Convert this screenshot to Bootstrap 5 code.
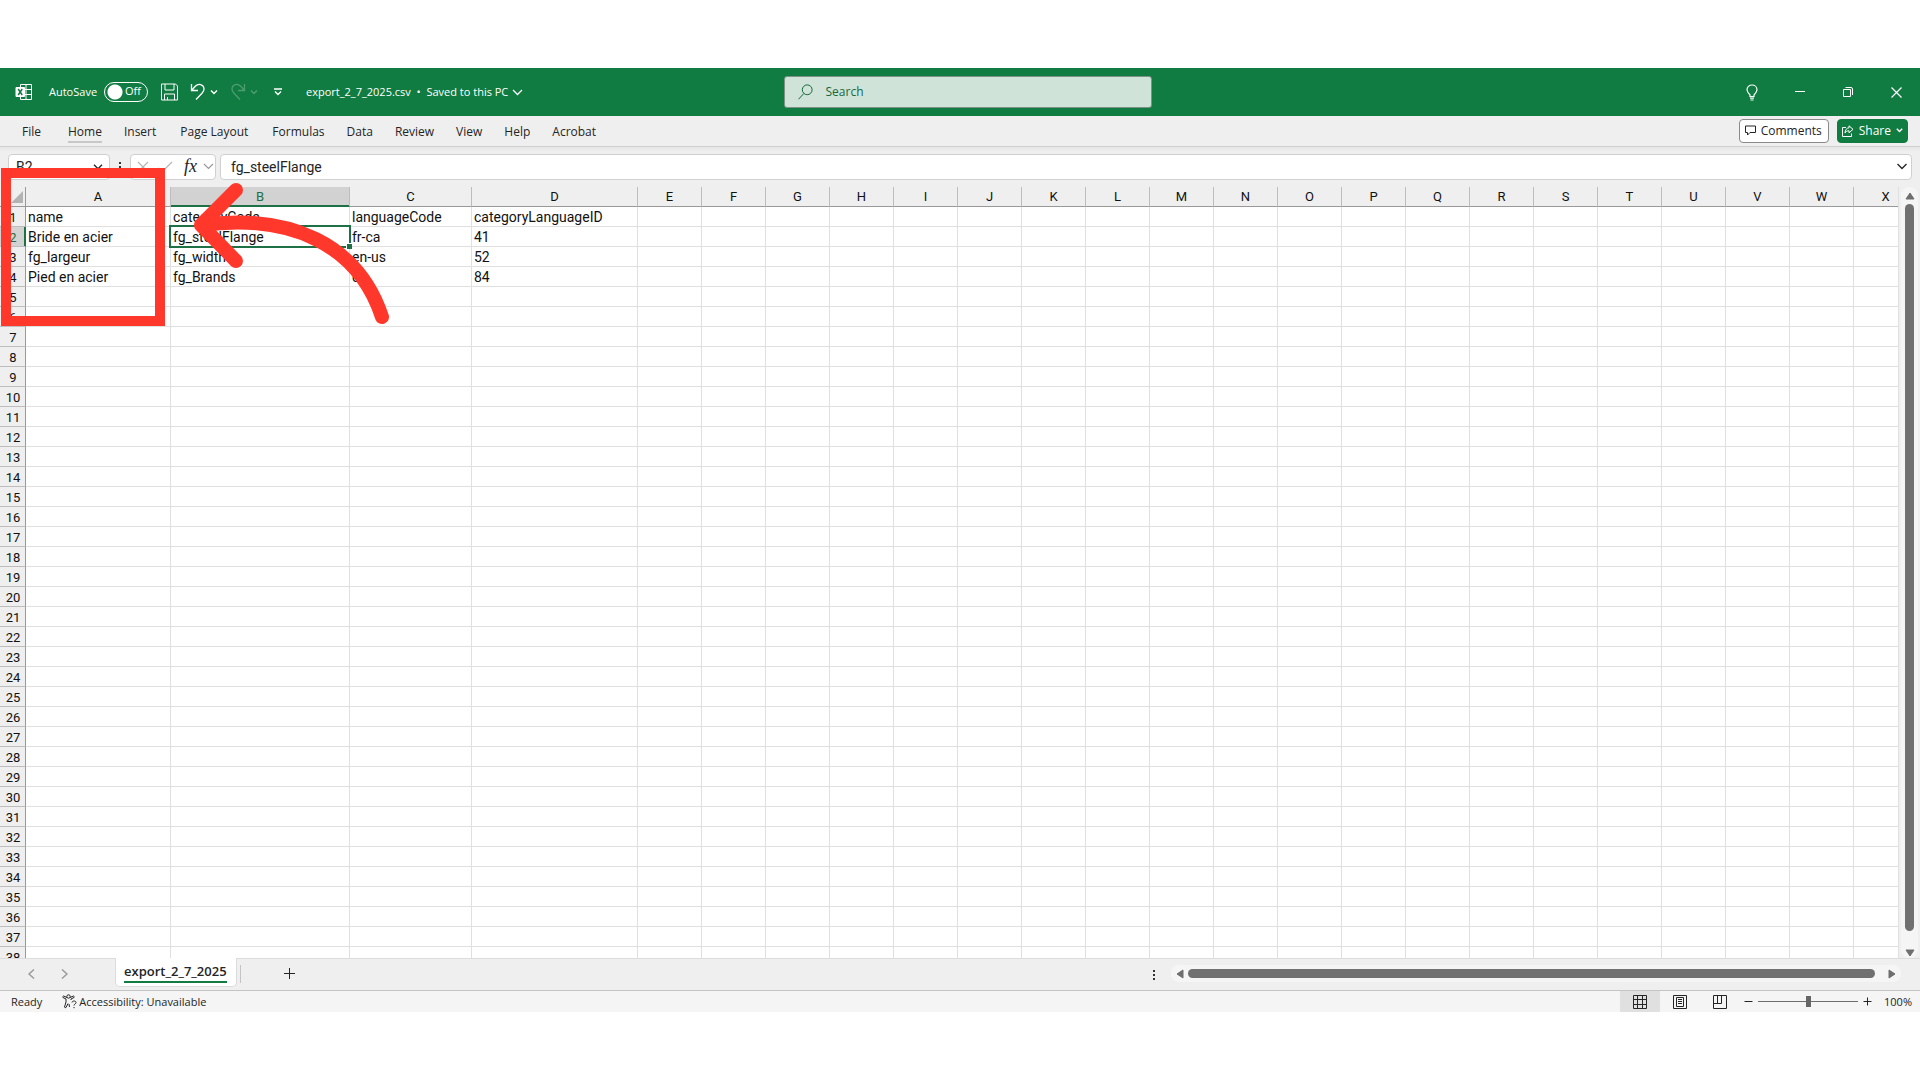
<!DOCTYPE html>
<html lang="en">
<head>
<meta charset="utf-8">
<meta name="viewport" content="width=device-width, initial-scale=1">
<title>export_2_7_2025.csv - Excel</title>
<link href="https://cdn.jsdelivr.net/npm/bootstrap@5.3.0/dist/css/bootstrap.min.css" rel="stylesheet">
<style>
  :root { --xl-green: #107c41; --xl-sel: #1e7145; --xl-bg: #efefef; --xl-red: #ff382b; }
  body { font-family: "Open Sans", "Noto Sans", sans-serif; font-size: 12px; line-height: 16px; color: #242424; background: #fff; height: 100vh; padding: 68px 0; overflow: hidden; }
  svg { display: block; flex: none; fill: none; stroke: currentColor; }
  svg.solid { stroke: none; }
  svg.soft { stroke: #999; }
  button { color: inherit; }
  .plain-btn { background: none; border: 0; padding: 0; display: flex; align-items: center; }
  .app-window { background: var(--xl-bg); }
  .title-bar { background: var(--xl-green); color: #fff; height: 48px; font-size: 11px; }
  .title-side { flex: 1 1 0; min-width: 0; height: 48px; }
  .title-left { padding-left: 15px; }
  .win-btn { width: 48px; height: 48px; justify-content: center; }
  .switch-box { appearance: none; width: 44px; height: 20px; border: 1px solid #fff; border-radius: 10px; margin: 0; background: radial-gradient(circle at 10px 9px, #fff 7px, transparent 8px); }
  .switch-wrap { display: grid; margin: 0 13px 0 7px; }
  .switch-wrap > * { grid-area: 1 / 1; }
  .switch-wrap span { padding: 1px 0 0 21px; pointer-events: none; }
  .search-box { width: 368px; height: 32px; background: #cfe3d8; border: 1px solid #7f9186; border-radius: 3px; padding: 0 13px; gap: 13px; color: #17693d; }
  .search-box input { background: none; border: 0; outline: 0; width: 100%; font-size: 12px; color: inherit; padding: 0; }
  .search-box input::placeholder { color: #17693d; opacity: 1; }
  .ribbon { height: 31px; border-bottom: 1px solid #cfcfcf; padding: 0 12px 0 11px; }
  .ribbon .nav-link { color: #242424; padding: 8px 11px 2px; line-height: 16px; }
  .ribbon .nav-link.file-link { margin-right: 5px; }
  .ribbon .nav-link.wide-link { padding: 8px 13px 2px; }
  .ribbon .nav-link span { display: block; border-bottom: 2px solid transparent; padding-bottom: 1px; }
  .ribbon .nav-link.active span { border-color: #c8c8c8; }
  .cmd-btn { height: 24px; border-radius: 4px; border: 1px solid #8a8a8a; background: #fff; padding: 0 6px 0 5px; display: flex; align-items: center; gap: 5px; }
  .cmd-share { background: var(--xl-green); border-color: var(--xl-green); color: #fff; padding: 0 4px; }
  .formula-row { height: 40px; padding: 7px 8px; background: linear-gradient(#e6e6e6, var(--xl-bg) 5px); }
  .field-box { height: 26px; background: #fff; border: 1px solid #d0d0d0; border-radius: 4px; display: flex; align-items: center; }
  .field-box input { border: 0; outline: 0; background: none; min-width: 0; flex: 1; padding: 0; color: #242424; font-family: Roboto, sans-serif; font-size: 14px; }
  .name-field { width: 102px; padding: 0 6px 0 7px; }
  .fx-field { width: 86px; padding: 0 1px 0 6px; color: #b5b5b5; }
  .formula-field { padding: 0 4px 0 10px; }
  .fx-sign { font: italic 18px "Liberation Serif", serif; color: #242424; margin-left: 11px; }
  .sheet-view { overflow: hidden; background: #fff; border-right: 1px solid #e0e0e0; }
  .sheet-grid { table-layout: fixed; border-collapse: separate; border-spacing: 0; width: 1918px; font-family: Roboto, sans-serif; font-size: 14px; line-height: 17px; color: #111; }
  .sheet-grid th, .sheet-grid td { height: 20px; padding: 2px 0 0; font-weight: 400; white-space: nowrap; border: solid #e0e0e0; border-width: 0 1px 1px 0; }
  .sheet-grid td { padding-left: 2px; }
  .sheet-grid th { background: var(--xl-bg); text-align: center; font-size: 13px; }
  .sheet-grid thead th { border-color: #bdbdbd; border-bottom-color: #999; padding-top: 1px; }
  .sheet-grid tbody th { border-color: #bdbdbd; border-right-color: #999; padding-left: 1px; }
  .sheet-grid thead th.corner { border-right-color: #999; }
  .corner svg { margin-left: 11px; }
  .sheet-grid thead th.col-on { background: #d2d2d2; color: var(--xl-sel); box-shadow: inset 0 -1px var(--xl-sel); border-bottom-color: var(--xl-sel); }
  .sheet-grid tbody th.row-on { background: #d2d2d2; color: var(--xl-sel); box-shadow: inset -1px 0 var(--xl-sel); border-right-color: var(--xl-sel); }
  .cell-on { position: relative; }
  .cell-on::before { content: ""; position: absolute; inset: -2px; border: 2px solid var(--xl-sel); }
  .cell-on::after { content: ""; position: absolute; right: -3px; bottom: -3px; width: 5px; height: 5px; background: var(--xl-sel); border: solid #fff; border-width: 1px 0 0 1px; box-sizing: content-box; }
  .v-track { width: 17px; margin: 0 2px; background: #f5f5f5; border-radius: 8px; padding: 5px 0 1px; color: #6e6e6e; }
  .v-thumb { width: 9px; border-radius: 5px; background: #707070; margin: 4px 0 18px; }
  .tab-row { height: 33px; border-top: 1px solid #dcdcdc; border-bottom: 1px solid #c4c4c4; padding: 0 19px 0 26px; }
  .tab-row .plain-btn { height: 29px; }
  .sheet-tab { background: #fff; border: 1px solid #dcdcdc; border-top: 0; border-radius: 0 0 5px 5px; height: 29px; margin: -1px 0 0 45px; padding: 3px 9px 0 8px; font-weight: 600; color: #242424; text-decoration: none; font-size: 13px; }
  .sheet-tab span { display: block; line-height: 20px; border-bottom: 2px solid var(--xl-green); }
  .tab-sep { width: 1px; height: 18px; background: #c4c4c4; margin: 6px 43px 0 3px; }
  .h-track { width: 730px; height: 17px; border-radius: 8px; background: #f5f5f5; padding: 0 5px; color: #6e6e6e; margin-top: 6px; }
  .h-thumb { height: 9px; border-radius: 5px; background: #707070; margin: 0 13px 0 4px; }
  .status-row { height: 21px; background: #f5f5f5; padding: 0 8px 0 11px; font-size: 11px; }
  .acc-text { margin-left: 2px; }
  .view-btn { width: 40px; height: 21px; justify-content: center; }
  .view-btn.is-on { background: #e0e0e0; }
  .zoom-range { appearance: none; width: 100px; height: 12px; margin: 0 5px; background: linear-gradient(#6e6e6e, #6e6e6e) center / 100% 1px no-repeat; }
  .zoom-range::-webkit-slider-thumb { appearance: none; width: 5px; height: 11px; background: #666; }
  .mark-frame { position: absolute; left: 1px; top: 168px; width: 164px; height: 158px; border: 10px solid var(--xl-red); }
  .mark-arrow { position: absolute; left: 190px; top: 178px; color: var(--xl-red); }
</style>
<script src="https://cdn.jsdelivr.net/npm/bootstrap@5.3.0/dist/js/bootstrap.bundle.min.js" defer></script>
</head>
<body>
<div class="app-window d-flex flex-column h-100">
  <header class="title-bar d-flex align-items-center">
    <div class="title-side title-left d-flex align-items-center">
      <svg width="18" height="18" viewBox="0 0 18 18"><path d="M5.500 4V1.500h11v15h-11V14M11 1.500v15M5.500 6.500h11M5.500 11.500h11"/><path d="M1 4.500h8.500v9H1z" fill="#fff" stroke="#fff"/><path d="M3.200 6l4 6M7.200 6l-4 6" stroke="#107c41" stroke-width="1.500"/></svg>
      <label for="autosave" class="ms-3">AutoSave</label>
      <div class="switch-wrap"><input class="switch-box" type="checkbox" id="autosave"><span>Off</span></div>
      <button class="plain-btn" aria-label="Save"><svg width="17" height="18" viewBox="0 0 17 18"><path d="M.5 1h14l2 2v14H.5zM4 1v6h9V1M3.500 17v-6h10v6M6.500 17v-3"/></svg></button>
      <button class="plain-btn ms-2 ps-1" aria-label="Undo"><svg width="16" height="18" viewBox="0 0 16 18" stroke-width="1.300"><path d="M1.500 1v6.500H8M1.500 7.500l4-4.500c3-3 8-1.800 8.500 2.500.2 2-.7 3.300-2 4.700L6 16.500"/></svg><svg class="ms-1" width="8" height="6" viewBox="0 0 8 6" stroke-width="1.400"><path d="M1 1.500l3 3 3-3"/></svg></button>
      <button class="plain-btn ms-2 ps-1 opacity-25" aria-label="Redo"><svg width="16" height="18" viewBox="0 0 16 18" stroke-width="1.300"><path d="M14.500 1v6.500H8M14.500 7.500l-4-4.500C7.500 0 2.500 1.200 2 5.500c-.2 2 .7 3.300 2 4.700l6 6.300"/></svg><svg class="ms-1" width="8" height="6" viewBox="0 0 8 6" stroke-width="1.400"><path d="M1 1.500l3 3 3-3"/></svg></button>
      <button class="plain-btn ms-3" aria-label="Customize toolbar"><svg width="8" height="8" viewBox="0 0 8 8" stroke-width="1.300"><path d="M0 1h8M1 3.500l3 3 3-3"/></svg></button>
      <button class="plain-btn ms-4 gap-1"><span>export_2_7_2025.csv&nbsp; •&nbsp; Saved to this PC</span><svg width="11" height="7" viewBox="0 0 11 7" stroke-width="1.300"><path d="M1 1l4.500 4.500L10 1"/></svg></button>
    </div>
    <label class="search-box d-flex align-items-center" for="search">
      <svg width="15" height="16" viewBox="0 0 15 16"><circle cx="9.200" cy="5.800" r="4.900"/><path d="M5.800 9.500L.5 15.300"/></svg>
      <input id="search" type="text" placeholder="Search">
    </label>
    <div class="title-side d-flex align-items-center justify-content-end">
      <button class="plain-btn win-btn" aria-label="Ideas"><svg width="12" height="17" viewBox="0 0 12 17" stroke-width="1.200"><path d="M4 12.500V11C2.500 9.500 1 8 1 5.700 1 3 3.200 1 6 1s5 2 5 4.700C11 8 9.500 9.500 8 11v1.500zM4 14.200h4M4.500 16h3"/></svg></button>
      <button class="plain-btn win-btn" aria-label="Minimize"><svg width="10" height="10" viewBox="0 0 10 10"><path d="M0 4.500h10"/></svg></button>
      <button class="plain-btn win-btn" aria-label="Restore"><svg width="10" height="10" viewBox="0 0 10 10"><path d="M.5 2.500h7v7h-7zM2.500.500H8q1.500 0 1.500 1.500v6"/></svg></button>
      <button class="plain-btn win-btn" aria-label="Close"><svg width="11" height="11" viewBox="0 0 11 11" stroke-width="1.200"><path d="M.5.500l10 10M10.500.500l-10 10"/></svg></button>
    </div>
  </header>

  <div class="ribbon d-flex align-items-center justify-content-between">
    <nav class="nav flex-nowrap align-self-start">
      <a class="nav-link file-link" href="#"><span>File</span></a>
      <a class="nav-link active" href="#"><span>Home</span></a>
      <a class="nav-link" href="#"><span>Insert</span></a>
      <a class="nav-link wide-link" href="#"><span>Page Layout</span></a>
      <a class="nav-link" href="#"><span>Formulas</span></a>
      <a class="nav-link" href="#"><span>Data</span></a>
      <a class="nav-link" href="#"><span>Review</span></a>
      <a class="nav-link" href="#"><span>View</span></a>
      <a class="nav-link" href="#"><span>Help</span></a>
      <a class="nav-link" href="#"><span>Acrobat</span></a>
    </nav>
    <div class="d-flex gap-2">
      <button class="cmd-btn"><svg width="11" height="11" viewBox="0 0 11 11"><path d="M.5 1h10v6.500H5L2.500 10V7.500h-2z"/></svg>Comments</button>
      <button class="cmd-btn cmd-share"><svg width="12" height="12" viewBox="0 0 12 12"><path d="M4 2.500H.5v9h9V8.500M7 .8l4 3.500-4 3.500v-2c-2 0-3 .7-4 2.200.2-3 1.500-5 4-5.200z"/></svg>Share<svg width="7" height="5" viewBox="0 0 7 5" stroke-width="1.400"><path d="M.8.800l2.700 2.700L6.200.800"/></svg></button>
    </div>
  </div>

  <div class="formula-row d-flex">
    <div class="field-box name-field"><input type="text" value="B2" aria-label="Name box"><svg width="10" height="6" viewBox="0 0 10 6" stroke-width="1.300"><path d="M1 .800l4 4 4-4"/></svg></div>
    <svg class="solid mx-2 mt-2" width="4" height="12" viewBox="0 0 4 12"><path d="M1 0h2v2H1zM1 4h2v2H1zM1 8h2v2H1z" fill="#333"/></svg>
    <div class="field-box fx-field">
      <button class="plain-btn" aria-label="Cancel"><svg width="12" height="12" viewBox="0 0 12 12" stroke-width="1.200"><path d="M1 1l10 10M11 1L1 11"/></svg></button>
      <button class="plain-btn ms-2" aria-label="Enter"><svg width="16" height="12" viewBox="0 0 16 12" stroke-width="1.200"><path d="M1 7l4 4L15 1"/></svg></button>
      <button class="plain-btn fx-sign" aria-label="Insert function">fx</button>
      <svg class="soft ms-auto" width="11" height="7" viewBox="0 0 11 7" stroke-width="1.200"><path d="M1 1l4.500 4.500L10 1"/></svg>
    </div>
    <div class="field-box formula-field flex-grow-1 ms-1"><input type="text" value="fg_steelFlange" aria-label="Formula bar"><svg width="10" height="7" viewBox="0 0 10 7" stroke-width="1.300"><path d="M.5 1L5 5.500 9.500 1"/></svg></div>
  </div>

  <main class="d-flex flex-grow-1 overflow-hidden">
    <div class="sheet-view flex-fill">
      <table class="sheet-grid"><colgroup id="cols"></colgroup><thead><tr id="letters"></tr></thead><tbody id="rows"></tbody></table>
    </div>
    <div class="v-track d-flex flex-column align-items-center flex-shrink-0">
      <svg width="10" height="8" viewBox="0 0 10 8"><path d="M5 1l4 6H1z" fill="currentColor" stroke-linejoin="round"/></svg>
      <div class="v-thumb flex-grow-1"></div>
      <svg width="10" height="8" viewBox="0 0 10 8"><path d="M5 7l4-6H1z" fill="currentColor" stroke-linejoin="round"/></svg>
    </div>
  </main>

  <div class="tab-row d-flex">
    <button class="plain-btn" aria-label="Previous sheet"><svg class="soft" width="10" height="10" viewBox="0 0 10 10" stroke-width="1.400"><path d="M8 .500L3 5l5 4.500"/></svg></button>
    <button class="plain-btn ms-4" aria-label="Next sheet"><svg class="soft" width="10" height="10" viewBox="0 0 10 10" stroke-width="1.400"><path d="M2 .500L7 5 2 9.500"/></svg></button>
    <a class="sheet-tab" href="#"><span>export_2_7_2025</span></a>
    <div class="tab-sep"></div>
    <button class="plain-btn" aria-label="New sheet"><svg width="11" height="11" viewBox="0 0 11 11"><path d="M5.500 0v11M0 5.500h11"/></svg></button>
    <svg class="solid ms-auto mt-2 me-3" width="2" height="16" viewBox="0 0 2 16"><path d="M0 3h2v2H0zM0 7h2v2H0zM0 11h2v2H0z" fill="#333"/></svg>
    <div class="h-track d-flex align-items-center">
      <svg width="8" height="10" viewBox="0 0 8 10"><path d="M1 5l6-4v8z" fill="currentColor" stroke-linejoin="round"/></svg>
      <div class="h-thumb flex-grow-1"></div>
      <svg width="8" height="10" viewBox="0 0 8 10"><path d="M7 5L1 1v8z" fill="currentColor" stroke-linejoin="round"/></svg>
    </div>
  </div>

  <footer class="status-row d-flex align-items-center">
    <span>Ready</span>
    <svg class="ms-3 ps-1" width="19" height="15" viewBox="0 0 15 15"><circle cx="6.500" cy="2.500" r="1.700"/><path d="M5 3.500L1.500 2Q.3 2.500 1 3.500l3 1.500v3l-1.500 5q.5 1.300 1.500.500l2-4M8 3.500L11.500 2q1.200.5.500 1.500L9 5v1M7 10l.5 3M10 8.500c0-2 4-2 4 0 0 1.500-2 1.500-2 3M12 13v1.200"/></svg>
    <span class="acc-text">Accessibility: Unavailable</span>
    <div class="ms-auto d-flex align-items-center">
      <button class="plain-btn view-btn is-on" aria-label="Normal view"><svg width="14" height="14" viewBox="0 0 14 14"><path d="M.5.500h13v13H.5zM.5 4.500h13M.5 9.500h13M4.500.500v13M9.500.500v13"/></svg></button>
      <button class="plain-btn view-btn" aria-label="Page layout view"><svg width="14" height="14" viewBox="0 0 14 14"><path d="M.5.500h13v13H.5zM3.500 2.500h7v9h-7zM5 4.500h4M5 6.500h4M5 8.500h4"/></svg></button>
      <button class="plain-btn view-btn" aria-label="Page break view"><svg width="14" height="14" viewBox="0 0 14 14"><path d="M.5.500h13v13H.5zM.5 8.500h8v-8M4.500.500v8"/></svg></button>
      <button class="plain-btn ms-1" aria-label="Zoom out"><svg width="9" height="9" viewBox="0 0 9 9"><path d="M.5 4.500h8"/></svg></button>
      <input class="zoom-range" type="range" min="0" max="100" value="50" aria-label="Zoom">
      <button class="plain-btn" aria-label="Zoom in"><svg width="9" height="9" viewBox="0 0 9 9"><path d="M.5 4.500h8M4.500.500v8"/></svg></button>
      <span class="ms-2 ps-1">100%</span>
    </div>
  </footer>
</div>

<div class="mark-frame"></div>
<svg class="mark-arrow" width="206" height="154" viewBox="190 178 206 154" stroke-width="14" stroke-linecap="round" stroke-linejoin="round"><path d="M236 190L201 225l35 36M201 225C290 213 358 244 382 317"/></svg>

<script>
  const data = [
    ['name', 'categoryCode', 'languageCode', 'categoryLanguageID'],
    ['Bride en acier', 'fg_steelFlange', 'fr-ca', '41'],
    ['fg_largeur', 'fg_width', 'en-us', '52'],
    ['Pied en acier', 'fg_Brands', 'en', '84']
  ];
  const letters = 'ABCDEFGHIJKLMNOPQRSTUVWX'.split('');
  const widths = [26, 145, 179, 122, 166].concat(Array(20).fill(64));
  document.getElementById('cols').innerHTML = widths.map(w => `<col style="width:${w}px">`).join('');
  document.getElementById('letters').innerHTML =
    '<th class="corner"><svg class="solid" width="12" height="12" viewBox="0 0 12 12"><path d="M12 0v12H0z" fill="#b3b3b3"/></svg></th>' +
    letters.map(l => `<th${l === 'B' ? ' class="col-on"' : ''}>${l}</th>`).join('');
  let html = '';
  for (let r = 0; r < 38; r++) {
    html += `<tr><th${r === 1 ? ' class="row-on"' : ''}>${r + 1}</th>` +
      letters.map((l, c) => `<td${r === 1 && c === 1 ? ' class="cell-on"' : ''}>${(data[r] || [])[c] || ''}</td>`).join('') + '</tr>';
  }
  document.getElementById('rows').innerHTML = html;
</script>
</body>
</html>
